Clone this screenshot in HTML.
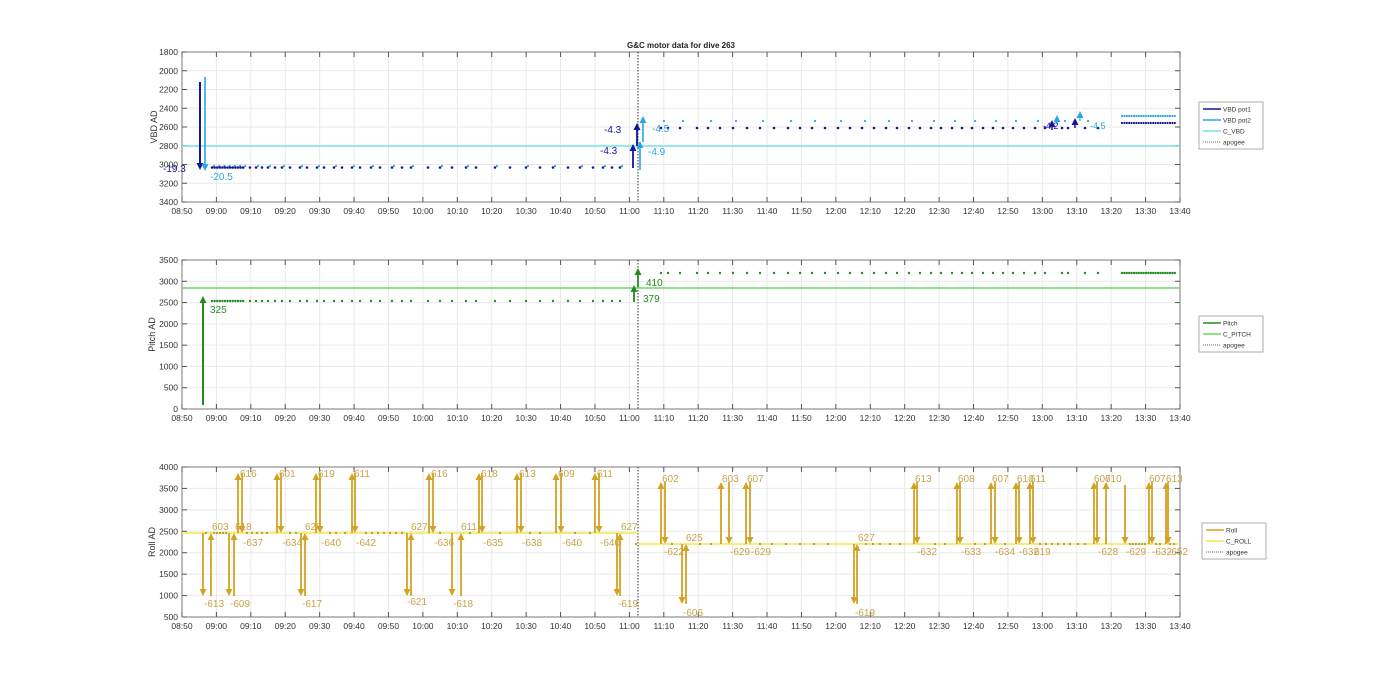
<!DOCTYPE html>
<html><head><meta charset="utf-8"><style>
html,body{margin:0;padding:0;background:#fff;width:1400px;height:693px;overflow:hidden}
svg{display:block;font-family:"Liberation Sans",sans-serif}
</style></head><body>
<svg id="s" width="1400" height="693" xmlns="http://www.w3.org/2000/svg"></svg>
<script>
var S=document.getElementById('s'),h='';
var L=182,R=1180,step=(R-L)/29;
function tx(m){return L+m*3.441;} // minutes after 08:50
var labs=[];for(var i=0;i<30;i++){var t=530+i*10,hh=Math.floor(t/60),mm=t%60;labs.push((hh<10?'0':'')+hh+':'+(mm<10?'0':'')+mm);}
function axes(top,bot,yt,ylabel,ylab){
  // grid
  for(var i=1;i<29;i++){var x=L+i*step;h+='<line x1="'+x+'" y1="'+top+'" x2="'+x+'" y2="'+bot+'" stroke="#e9e9e9" stroke-width="1"/>';}
  for(var j=0;j<yt.length;j++){var y=yt[j][0];h+='<line x1="'+L+'" y1="'+y+'" x2="'+R+'" y2="'+y+'" stroke="#e9e9e9"/>';}
  h+='<rect x="'+L+'" y="'+top+'" width="'+(R-L)+'" height="'+(bot-top)+'" fill="none" stroke="#7a7a7a" stroke-width="1"/>';
  for(var i=0;i<30;i++){var x=L+i*step;h+='<line x1="'+x+'" y1="'+bot+'" x2="'+x+'" y2="'+(bot-5)+'" stroke="#555"/><line x1="'+x+'" y1="'+top+'" x2="'+x+'" y2="'+(top+5)+'" stroke="#555"/>';
    h+='<text x="'+x+'" y="'+(bot+12)+'" font-size="8.5" fill="#333" text-anchor="middle">'+labs[i]+'</text>';}
  for(var j=0;j<yt.length;j++){var y=yt[j][0];h+='<line x1="'+L+'" y1="'+y+'" x2="'+(L+5)+'" y2="'+y+'" stroke="#555"/><line x1="'+R+'" y1="'+y+'" x2="'+(R-5)+'" y2="'+y+'" stroke="#555"/>';
    h+='<text x="'+(L-4)+'" y="'+(y+3)+'" font-size="8.5" fill="#333" text-anchor="end">'+yt[j][1]+'</text>';}
  var cy=(top+bot)/2;h+='<text x="'+ylab+'" y="'+cy+'" font-size="9" fill="#333" text-anchor="middle" transform="rotate(-90 '+ylab+' '+cy+')">'+ylabel+'</text>';
  h+='<line x1="638" y1="'+top+'" x2="638" y2="'+bot+'" stroke="#333" stroke-dasharray="1.5,1.5"/>';
}
function arr(x,y1,y2,c,w){var d=y2>y1?1:-1;w=w||1.6;
  h+='<line x1="'+x+'" y1="'+y1+'" x2="'+x+'" y2="'+(y2-d*5)+'" stroke="'+c+'" stroke-width="'+w+'"/>';
  h+='<polygon points="'+(x-3.5)+','+(y2-d*7)+' '+(x+3.5)+','+(y2-d*7)+' '+x+','+y2+'" fill="'+c+'"/>';}
function tex(x,y,s,c,fs){h+='<text x="'+x+'" y="'+y+'" font-size="'+(fs||10)+'" fill="'+c+'">'+s+'</text>';}
function dot(x,y,c,r){h+='<circle cx="'+x+'" cy="'+y+'" r="'+(r||1.3)+'" fill="'+c+'"/>';}
// dot positions
var pre=[];for(var x=212;x<245;x+=2.6)pre.push(x);
[250,256,262,268,275,282,290,300,307,317,324,334,342,352,360,371,380,392,402,411,428,440,452,466,476,495,510,526,540,553,568,580,593,603,612,620].forEach(function(v){pre.push(v)});
var post=[661,668,680,697,708,720,733,747,760,774,788,800,812,825,838,850,862,874,886,897,909,920,931,941,952,962,972,983,993,1003,1013,1024,1035,1045,1062,1068,1085,1098];
var dense=[];for(var x=1122;x<1176;x+=2.4)dense.push(x);
var DB='#15159a',LB='#2ca6e2',CV='#74e3ea';
// ---- VBD ----
var vt=[];for(var v=1800;v<=3400;v+=200)vt.push([52+(v-1800)/1600*150,v]);
axes(52,202,vt,'VBD AD',157);
h+='<line x1="'+L+'" y1="146" x2="'+R+'" y2="146" stroke="'+CV+'" stroke-width="1.6"/>';
pre.forEach(function(x,i){dot(x,167.5,DB);if(i%2==0)dot(x+2,166,LB,1.1);});
post.forEach(function(x,i){dot(x,128,DB);if(i%2==0)dot(x+3,121,LB,1.1);});
dense.forEach(function(x){dot(x,123,DB,1.1);dot(x,116,LB,1.1);});
arr(200,82,170,DB,2);arr(205,77,171,LB,1.6);
tex(163,172,'-19.3',DB);tex(210,180,'-20.5',LB);
arr(633,168,144,DB,1.8);arr(637,146,123,DB,1.8);arr(640,170,141,LB,1.6);arr(643,142,116,LB,1.6);
tex(600,154,'-4.3',DB);tex(604,133,'-4.3',DB);tex(648,155,'-4.9',LB);tex(652,132,'-4.5',LB);
arr(1052,130,120,DB,1.5);arr(1075,128,118,DB,1.5);arr(1057,124,115,LB,1.2);arr(1080,121,111,LB,1.2);
tex(1043,129,'-4.2',DB,9);tex(1090,129,'-4.5',LB,9);
h+='<text x="681" y="48" font-size="8" font-weight="bold" fill="#222" text-anchor="middle">G&amp;C motor data for dive 263</text>';
// ---- Pitch ----
var pt=[];for(var p=0;p<=3500;p+=500)pt.push([409-p/3500*149,p]);
axes(260,409,pt,'Pitch AD',155);
var G='#228b22';
h+='<line x1="'+L+'" y1="288" x2="'+R+'" y2="288" stroke="#6ad66a" stroke-width="1.6"/>';
pre.forEach(function(x){dot(x,301,G,1.2);});
post.concat(dense).forEach(function(x){dot(x,273,G,1.2);});
arr(203,405,296,G,2);tex(210,313,'325',G);
arr(634,302,285,G,1.8);arr(638,287,268,G,1.8);tex(643,302,'379',G);tex(646,286,'410',G);
// ---- Roll ----
var rt=[];for(var r=500;r<=4000;r+=500)rt.push([617-(r-500)/3500*150,r]);
axes(467,617,rt,'Roll AD',155);
var RC='#d4a222',RY='#f3e84a',TX='#c9a24a';
h+='<line x1="'+L+'" y1="533" x2="638" y2="533" stroke="'+RY+'" stroke-width="1.6"/><line x1="638" y1="544" x2="'+R+'" y2="544" stroke="'+RY+'" stroke-width="1.6"/>';
[206,214,217,220,223,226,247,252,257,262,267,290,296,330,336,345,366,372,378,384,390,396,402,440,470,500,530,540,575,590].forEach(function(x){dot(x,533,'#b8963a',1.1);});
[636,672,700,711,760,772,786,800,814,828,866,873,880,890,900,935,945,975,985,1005,1040,1046,1052,1058,1064,1070,1078,1085,1130,1133,1136,1139,1142,1145,1156,1160,1170,1174].forEach(function(x){dot(x,544,'#b8963a',1.1);});
var T=473,B1=596,B2=604,M1=533,M2=544;
function up(x,b,t,lab,lx,ly){arr(x,b,t,RC,1.8);if(lab)tex(lx||x+2,ly||t+4,lab,TX);}
function dn(x,t,b,lab,lx,ly){arr(x,t,b,RC,1.8);if(lab)tex(lx||x+1,ly||b+11,lab,TX);}
// pre-apogee pairs
dn(203,M1,B1,'-613');up(211,B1,M1,'603',212,530);
dn(229,M1,B1,'-609',230,607);up(234,B1,M1,'618',235,530);
up(238,M1,T,'616');dn(242,T,M1,'-637',243,546);
up(277,M1,T,'601');dn(281,T,M1,'-634',282,546);
dn(301,M1,B1,'-617',302,607);up(305,B1,M1,'626',305,530);
up(316,M1,T,'619');dn(320,T,M1,'-640',321,546);
up(352,M1,T,'611');dn(355,T,M1,'-642',356,546);
dn(407,M1,B1,'-621',407,605);up(411,B1,M1,'627',411,530);
up(429,M1,T,'616');dn(433,T,M1,'-636',434,546);
dn(452,M1,B1,'-618',453,607);up(461,B1,M1,'611',461,530);
up(479,M1,T,'618');dn(482,T,M1,'-635',483,546);
up(517,M1,T,'613');dn(521,T,M1,'-638',522,546);
up(556,M1,T,'609');dn(561,T,M1,'-640',562,546);
up(595,M1,T,'611');dn(599,T,M1,'-640',600,546);
dn(617,M1,B1,'-619',618,607);up(620,B1,M1,'627',621,530);
// post-apogee
up(661,M2,T+9,'602',662,482);dn(665,T+9,M2,'-622',664,555);
dn(682,M2,B2,'-606',683,616);up(686,B2,M2,'625',686,541);
up(721,M2,T+9,'603',722,482);dn(729,T+9,M2,'-629',730,555);
up(746,M2,T+9,'607',747,482);dn(750,T+9,M2,'-629',751,555);
dn(854,M2,B2,'-619',855,616);up(857,B2,M2,'627',858,541);
up(914,M2,T+9,'613',915,482);dn(917,T+9,M2,'-632',917,555);
up(957,M2,T+9,'608',958,482);dn(960,T+9,M2,'-633',961,555);
up(991,M2,T+9,'607',992,482);dn(995,T+9,M2,'-634',995,555);
up(1016,M2,T+9,'610',1017,482);dn(1019,T+9,M2,'-632',1019,555);
up(1030,M2,T+9,'611',1030,482);dn(1033,T+9,M2,'619',1034,555);
up(1094,M2,T+9,'607',1094,482);dn(1097,T+9,M2,'-628',1098,555);
up(1106,M2,T+9,'610',1105,482);
dn(1125,485,M2,'-629',1126,555);
up(1149,M2,T+9,'607',1149,482);dn(1152,T+9,M2,'-632',1152,555);
up(1166,M2,T+9,'613',1166,482);dn(1168,T+9,M2,'-652',1168,555);
// legends
function leg(x,y,w,items){var hh=items.length*11+3;h+='<rect x="'+x+'" y="'+y+'" width="'+w+'" height="'+hh+'" fill="#fff" stroke="#999" stroke-width="0.8"/>';
 items.forEach(function(it,i){var yy=y+7+i*11;h+='<line x1="'+(x+4)+'" y1="'+yy+'" x2="'+(x+22)+'" y2="'+yy+'" stroke="'+it[1]+'" stroke-width="'+(it[2]?0.8:1.6)+'"'+(it[2]?' stroke-dasharray="1,1"':'')+'/>';
 tex(x+24,yy+2.5,it[0],'#333',6.5);});}
leg(1199,102,64,[['VBD pot1',DB],['VBD pot2',LB],['C_VBD',CV],['apogee','#333',1]]);
leg(1199,316,64,[['Pitch',G],['C_PITCH','#6ad66a'],['apogee','#333',1]]);
leg(1202,523,64,[['Roll',RC],['C_ROLL',RY],['apogee','#333',1]]);
S.innerHTML=h;
</script>
</body></html>
